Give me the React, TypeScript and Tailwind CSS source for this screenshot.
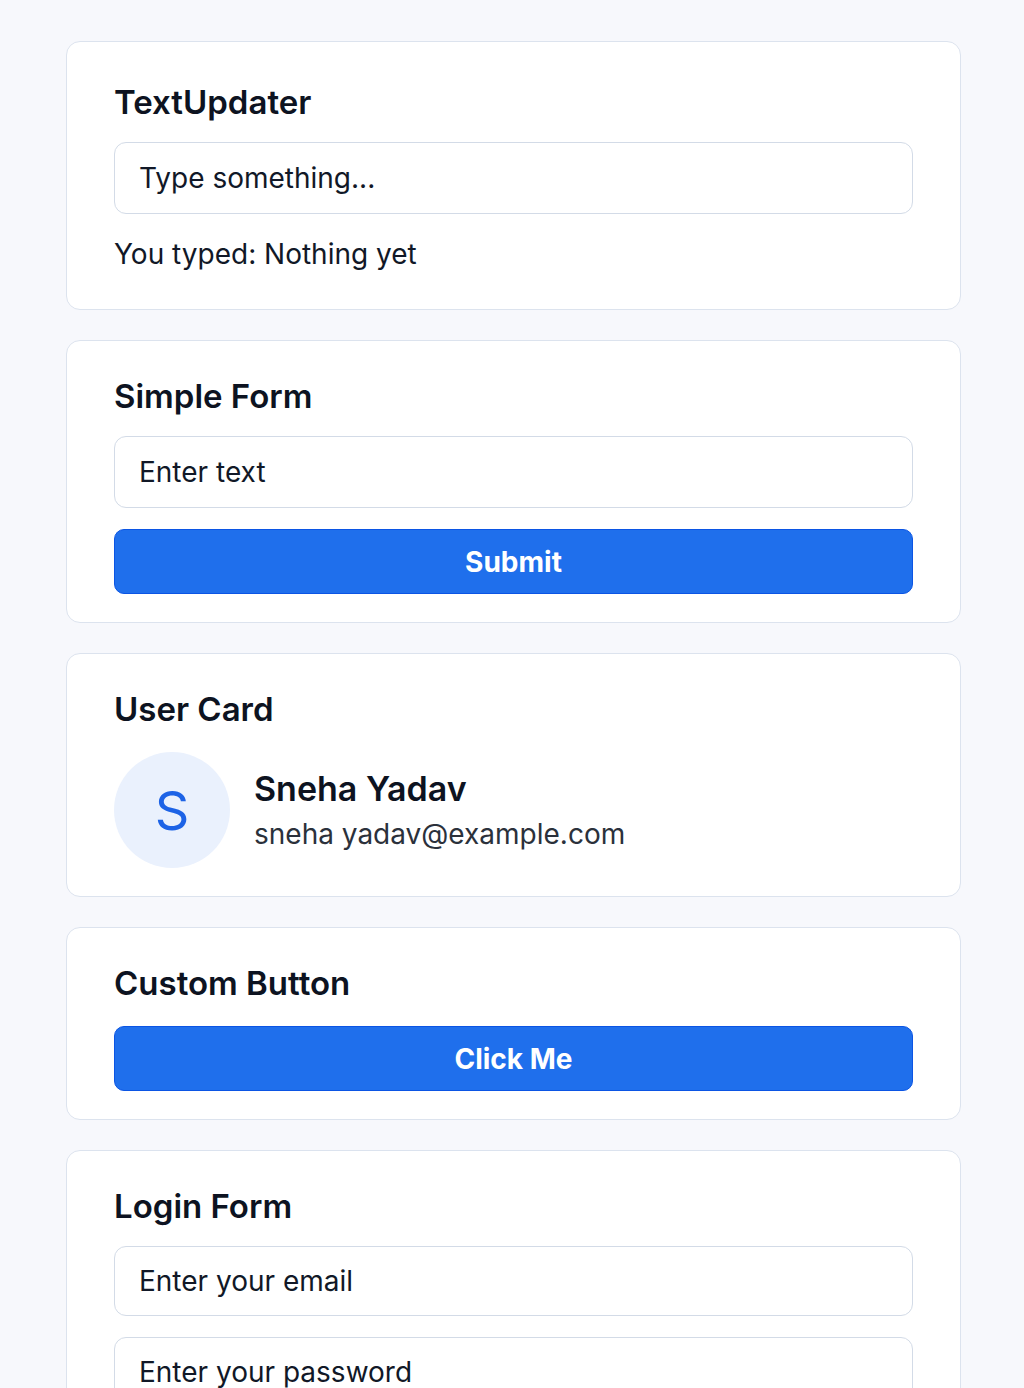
import { useState } from "react";

const font = { fontFamily: "Inter, 'Noto Sans', sans-serif" };

function Card({ title, children, className = "pt-[35px]" }: { title: string; children: React.ReactNode; className?: string }) {
  return (
    <section className={`bg-white border border-[#dce3ee] rounded-[14px] px-[47px] pb-7 ${className}`}>
      <h2 className="text-[33px] leading-[40px] font-semibold text-[#0d1321]">{title}</h2>
      {children}
    </section>
  );
}

function Field({ placeholder, value, onChange, type = "text", h = "h-[72px]" }: {
  placeholder: string; value?: string; onChange?: (v: string) => void; type?: string; h?: string;
}) {
  return (
    <input
      type={type}
      placeholder={placeholder}
      value={value}
      onChange={(e) => onChange?.(e.target.value)}
      className={`w-full ${h} rounded-xl border border-[#d3dbe7] bg-white px-6 text-[28px] text-[#111827] placeholder:text-[#111827] outline-none`}
    />
  );
}

function BlueButton({ label }: { label: string }) {
  return (
    <button className="w-full h-[65px] rounded-[10px] bg-[#1f6fec] border border-[#0b55e4] text-white text-[28px] font-bold">
      {label}
    </button>
  );
}

export default function App() {
  const [text, setText] = useState("");
  const [form, setForm] = useState("");
  const [email, setEmail] = useState("");
  const [pass, setPass] = useState("");

  return (
    <div className="min-h-screen bg-[#f7f8fc] pt-[41px] pb-10" style={font}>
      <div className="ml-[66px] w-[895px] flex flex-col gap-[30px]">
        {/* TextUpdater */}
        <Card title="TextUpdater" className="pt-[40px]">
          <div className="mt-5">
            <Field placeholder="Type something..." value={text} onChange={setText} />
          </div>
          <p className="mt-5 mb-[7px] text-[28px] leading-[40px] text-[#111827]">
            You typed: {text || "Nothing yet"}
          </p>
        </Card>

        {/* Simple Form */}
        <Card title="Simple Form">
          <div className="mt-5">
            <Field placeholder="Enter text" value={form} onChange={setForm} />
          </div>
          <div className="mt-[21px]">
            <BlueButton label="Submit" />
          </div>
        </Card>

        {/* User Card */}
        <Card title="User Card">
          <div className="mt-[23px] flex items-center gap-[24px]">
            <div className="w-[116px] h-[116px] rounded-full bg-[#eaf1fd] flex items-center justify-center text-[54px] text-[#1d63e6] font-normal">
              S
            </div>
            <div className="flex flex-col">
              <span className="text-[34px] leading-[42px] font-semibold text-[#0d1321]">Sneha Yadav</span>
              <span className="mt-[5px] text-[28px] leading-[38px] text-[#2b313b]">sneha yadav@example.com</span>
            </div>
          </div>
        </Card>

        {/* Custom Button */}
        <Card title="Custom Button">
          <div className="mt-[23px]">
            <BlueButton label="Click Me" />
          </div>
        </Card>

        {/* Login Form */}
        <Card title="Login Form">
          <div className="mt-5 flex flex-col gap-[21px]">
            <Field placeholder="Enter your email" type="email" value={email} onChange={setEmail} h="h-[70px]" />
            <Field placeholder="Enter your password" type="password" value={pass} onChange={setPass} h="h-[70px]" />
          </div>
          <div className="mt-[21px]">
            <BlueButton label="Login" />
          </div>
        </Card>
      </div>
    </div>
  );
}
